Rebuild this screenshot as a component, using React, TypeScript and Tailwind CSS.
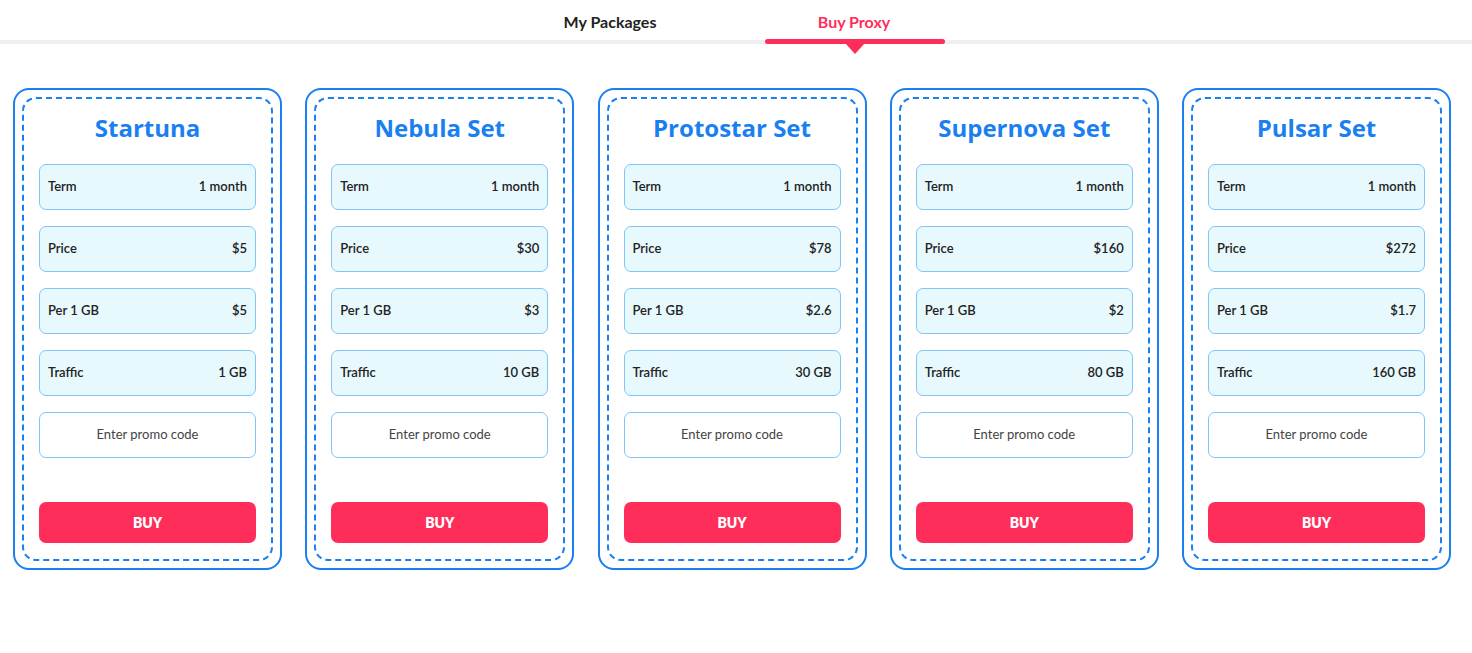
import React from "react";

const plans = [
  { name: "Startuna", price: "$5", per: "$5", traffic: "1 GB" },
  { name: "Nebula Set", price: "$30", per: "$3", traffic: "10 GB" },
  { name: "Protostar Set", price: "$78", per: "$2.6", traffic: "30 GB" },
  { name: "Supernova Set", price: "$160", per: "$2", traffic: "80 GB" },
  { name: "Pulsar Set", price: "$272", per: "$1.7", traffic: "160 GB" },
];

function Row({ label, value }: { label: string; value: string }) {
  return (
    <div className="flex h-[46px] items-center justify-between rounded-[7px] border border-[#7fc5f6] bg-[#e8f9fe] px-[8px] text-[13px] font-semibold text-[#222]">
      <span>{label}</span>
      <span>{value}</span>
    </div>
  );
}

export default function App() {
  return (
    <div className="min-h-[653px] bg-white" style={{ fontFamily: "Lato, 'Open Sans', sans-serif" }}>
      <div className="relative h-[44px]">
        <div className="flex h-[40px] items-center justify-center pt-[3px]">
          <div className="flex w-[180px] justify-center text-[16px] font-bold text-[#222]" style={{ marginLeft: "-8px" }}>
            My Packages
          </div>
          <div className="w-[64px]" />
          <div className="relative flex w-[180px] justify-center text-[16px] font-bold text-[#ff2d5a]">
            Buy Proxy
          </div>
        </div>
        <div className="h-[4px] w-full bg-[#efefef]" />
        <div className="absolute left-[765px] top-[39px] h-[5px] w-[180px] rounded-full bg-[#ff2d5a]" />
        <div className="absolute left-[845px] top-[43px] h-0 w-0 border-x-[10px] border-t-[11px] border-x-transparent border-t-[#ff2d5a]" />
      </div>

      <div className="mt-[44px] flex gap-[23.25px] pl-[13px]">
        {plans.map((p) => (
          <div key={p.name} className="w-[269px] rounded-[16px] border-2 border-[#1a7ff0] p-[7px]">
            <div className="flex h-[464px] flex-col rounded-[14px] border-2 border-dashed border-[#1a7ff0] px-[15px]">
              <div className="mt-[13px] text-center text-[24px] font-bold leading-[32px] text-[#1a7ff0]" style={{ fontFamily: "'Open Sans', sans-serif" }}>
                {p.name}
              </div>
              <div className="mt-[20px] flex flex-col gap-[16px]">
                <Row label="Term" value="1 month" />
                <Row label="Price" value={p.price} />
                <Row label="Per 1 GB" value={p.per} />
                <Row label="Traffic" value={p.traffic} />
                <div className="flex h-[46px] items-center justify-center rounded-[7px] border border-[#7fc5f6] bg-white text-[13px] text-[#444]">
                  Enter promo code
                </div>
              </div>
              <button className="mt-[44px] flex h-[41px] items-center justify-center rounded-[7px] bg-[#ff2d5a] text-[14px] font-extrabold text-white">
                BUY
              </button>
            </div>
          </div>
        ))}
      </div>
    </div>
  );
}
